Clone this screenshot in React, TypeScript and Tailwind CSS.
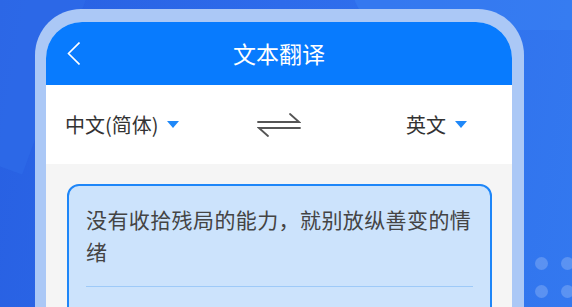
const Triangle = () => (
  <svg width="12" height="7" viewBox="0 0 12 7" className="shrink-0">
    <path d="M0 0h12L6 7z" fill="#1f88f8" />
  </svg>
)

const SwapIcon = () => (
  <svg width="44" height="24" viewBox="0 0 44 24" fill="none" stroke="#555" strokeWidth="1.8" strokeLinecap="round">
    <path d="M1 9h41L33 1" />
    <path d="M43 15H2l9 8" />
  </svg>
)

export default function App() {
  const font = { fontFamily: '"Noto Sans CJK SC", "Noto Sans", sans-serif' }

  return (
    <div
      className="relative h-[307px] w-[572px] overflow-hidden bg-[linear-gradient(100deg,#2860e2_0%,#2d6beb_45%,#3378ef_100%)]"
      style={font}
    >
      <div className="absolute -left-[60px] -top-[40px] h-[200px] w-[120px] rotate-[20deg] bg-[#2f6cea]/60" />
      <div className="absolute right-[-80px] top-[-60px] h-[90px] w-[300px] rounded-full bg-[#3a82f4]/50" />

      <div className="relative pl-[35px] pt-[9px]">
        <div className="w-[489px] rounded-t-[46px] bg-[#abc8f6] pl-[11px] pr-[12px] pt-[13px]">
          <div className="h-[300px] overflow-hidden rounded-t-[36px] bg-[#f5f5f5]">
            <div className="grid h-[63px] grid-cols-[1fr_auto_1fr] items-center bg-[#087bfe] text-white">
              <div className="pl-[21px]">
                <svg width="13" height="23" viewBox="0 0 13 23" fill="none" stroke="white" strokeWidth="1.6">
                  <path d="M12.5 0.5L1.5 11.5l11 11" />
                </svg>
              </div>
              <div className="text-[23px] leading-none">文本翻译</div>
              <div />
            </div>

            <div className="grid h-[79px] grid-cols-[1fr_auto_1fr] items-center bg-white text-[20px] text-[#333]">
              <div className="flex items-center gap-[8px] pl-[19px]">
                <span>中文(简体)</span>
                <Triangle />
              </div>
              <SwapIcon />
              <div className="flex items-center justify-end gap-[9px] pr-[45px]">
                <span>英文</span>
                <Triangle />
              </div>
            </div>

            <div className="px-[20px] pl-[21px] pt-[20px]">
              <div className="h-[200px] rounded-[12px] border-2 border-[#1e86f8] bg-[#cce3fc] px-[17px] pt-[17px]">
                <p className="text-[21px] leading-[32px] tracking-[0.4px] text-[#444]">
                  没有收拾残局的能力，就别放纵善变的情绪
                </p>
                <div className="mt-[19px] h-px bg-[#9ecaf8]" />
              </div>
            </div>
          </div>
        </div>
      </div>

      <div className="absolute left-[535px] top-[257px] grid grid-cols-2 gap-[15px]">
        <span className="h-[13px] w-[13px] rounded-full bg-white/20" />
        <span className="h-[13px] w-[13px] rounded-full bg-white/20" />
        <span className="h-[13px] w-[13px] rounded-full bg-white/20" />
        <span className="h-[13px] w-[13px] rounded-full bg-white/20" />
      </div>
    </div>
  )
}
